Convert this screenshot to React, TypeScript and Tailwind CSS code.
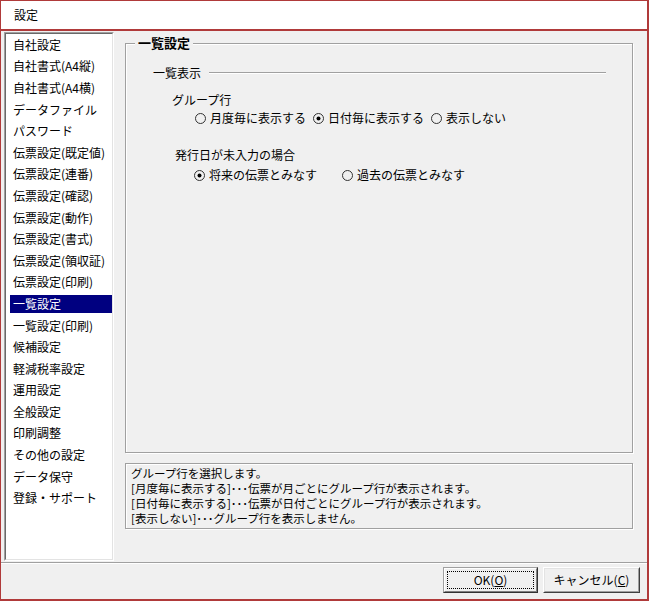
import React from "react";

const items = [
  "自社設定",
  "自社書式(A4縦)",
  "自社書式(A4横)",
  "データファイル",
  "パスワード",
  "伝票設定(既定値)",
  "伝票設定(連番)",
  "伝票設定(確認)",
  "伝票設定(動作)",
  "伝票設定(書式)",
  "伝票設定(領収証)",
  "伝票設定(印刷)",
  "一覧設定",
  "一覧設定(印刷)",
  "候補設定",
  "軽減税率設定",
  "運用設定",
  "全般設定",
  "印刷調整",
  "その他の設定",
  "データ保守",
  "登録・サポート",
];

function Radio({ checked, label }: { checked?: boolean; label: string }) {
  return (
    <div className="flex items-center h-[16px]">
      <svg width="13" height="13" viewBox="0 0 13 13" className="shrink-0">
        <circle cx="6.5" cy="6.5" r="5" fill="none" stroke="#333" strokeWidth="1" />
        {checked && <circle cx="6.5" cy="6.5" r="2" fill="#000" />}
      </svg>
      <span className="ml-[3px] leading-[16px] whitespace-nowrap">{label}</span>
    </div>
  );
}

export default function App() {
  return (
    <div className="w-[650px] h-[601px] bg-white font-['Noto_Sans_CJK_JP',sans-serif] text-[12px] text-black">
      <div className="w-[649px] h-[601px] border-l border-t border-r-[2px] border-b-[2px] border-[#b03a3a] flex flex-col">
        <div className="h-[28px] bg-white pl-[13px] flex items-center leading-[16px]">設定</div>
        <div className="h-[2px] bg-[#b03a3a]" />
        <div className="flex-1 bg-[#f0f0f0] flex flex-col">
          <div className="h-[531px] flex pl-[3px] pt-[1px]">
            <div className="w-[110px] h-[529px] border border-t-[#a0a0a0] border-l-[#a0a0a0] border-r-white border-b-white">
              <div className="h-full border border-t-[#696969] border-l-[#696969] border-r-[#e3e3e3] border-b-[#e3e3e3] bg-white pl-[4px]">
                {items.map((t) => (
                  <div key={t} className="h-[21.6px] flex items-center">
                    <div
                      className={
                        t === "一覧設定"
                          ? "w-full h-[18px] px-[3px] leading-[18px] bg-[#000080] text-white whitespace-nowrap"
                          : "w-full h-[18px] px-[3px] leading-[18px] whitespace-nowrap"
                      }
                    >
                      {t}
                    </div>
                  </div>
                ))}
              </div>
            </div>
            <div className="ml-[11px] w-[508px] flex flex-col">
              <div className="relative mt-[11px] h-[410px] border border-[#a0a0a0] shadow-[inset_1px_1px_0_#fff,1px_1px_0_#fff]">
                <span className="absolute left-[9px] top-[-9px] px-[3px] bg-[#f0f0f0] font-bold text-[13px] leading-[16px]">
                  一覧設定
                </span>
                <div className="pt-[21px] pl-[27px] pr-[26px]">
                  <div className="flex items-center h-[16px]">
                    <span className="leading-[16px] whitespace-nowrap">一覧表示</span>
                    <div className="flex-1 ml-[8px] h-[2px] border-t border-t-[#a0a0a0] border-b border-b-white" />
                  </div>
                  <div className="mt-[11px] ml-[19px] leading-[16px]">グループ行</div>
                  <div className="mt-[2px] ml-[41px] flex gap-[6px]">
                    <Radio label="月度毎に表示する" />
                    <Radio checked label="日付毎に表示する" />
                    <Radio label="表示しない" />
                  </div>
                  <div className="mt-[21px] ml-[22px] leading-[16px]">発行日が未入力の場合</div>
                  <div className="mt-[4px] ml-[40px] flex">
                    <div className="w-[148px]">
                      <Radio checked label="将来の伝票とみなす" />
                    </div>
                    <Radio label="過去の伝票とみなす" />
                  </div>
                </div>
              </div>
              <div className="mt-[10px] h-[66px] border border-[#a0a0a0] shadow-[inset_1px_1px_0_#fff,1px_1px_0_#fff] pl-[5px] pt-[2px] text-[11.5px] leading-[15px]">
                <div className="h-[15px] whitespace-nowrap">グループ行を選択します。</div>
                <div className="h-[15px] whitespace-nowrap">[月度毎に表示する]･･･伝票が月ごとにグループ行が表示されます。</div>
                <div className="h-[15px] whitespace-nowrap">[日付毎に表示する]･･･伝票が日付ごとにグループ行が表示されます。</div>
                <div className="h-[15px] whitespace-nowrap">[表示しない]･･･グループ行を表示しません。</div>
              </div>
            </div>
          </div>
          <div className="h-[1px] bg-[#a0a0a0]" />
          <div className="h-[1px] bg-white" />
          <div className="flex justify-end gap-[5px] pr-[7px] pt-[3px]">
            <div className="w-[95px] h-[26px] border border-t-[#a0a0a0] border-l-[#a0a0a0] border-r-[#333] border-b-[#333]">
              <div className="h-full border border-t-white border-l-white border-r-[#808080] border-b-[#808080] bg-[#f0f0f0] p-[2px]">
                <div className="h-full border border-dotted border-black flex items-center justify-center leading-[14px]">
                  OK(<u>O</u>)
                </div>
              </div>
            </div>
            <div className="w-[97px] h-[26px] border border-t-white border-l-white border-r-[#404040] border-b-[#404040]">
              <div className="h-full border border-t-[#e3e3e3] border-l-[#e3e3e3] border-r-[#a0a0a0] border-b-[#a0a0a0] bg-[#f0f0f0] flex items-center justify-center leading-[14px]">
                キャンセル(<u>C</u>)
              </div>
            </div>
          </div>
        </div>
      </div>
    </div>
  );
}
